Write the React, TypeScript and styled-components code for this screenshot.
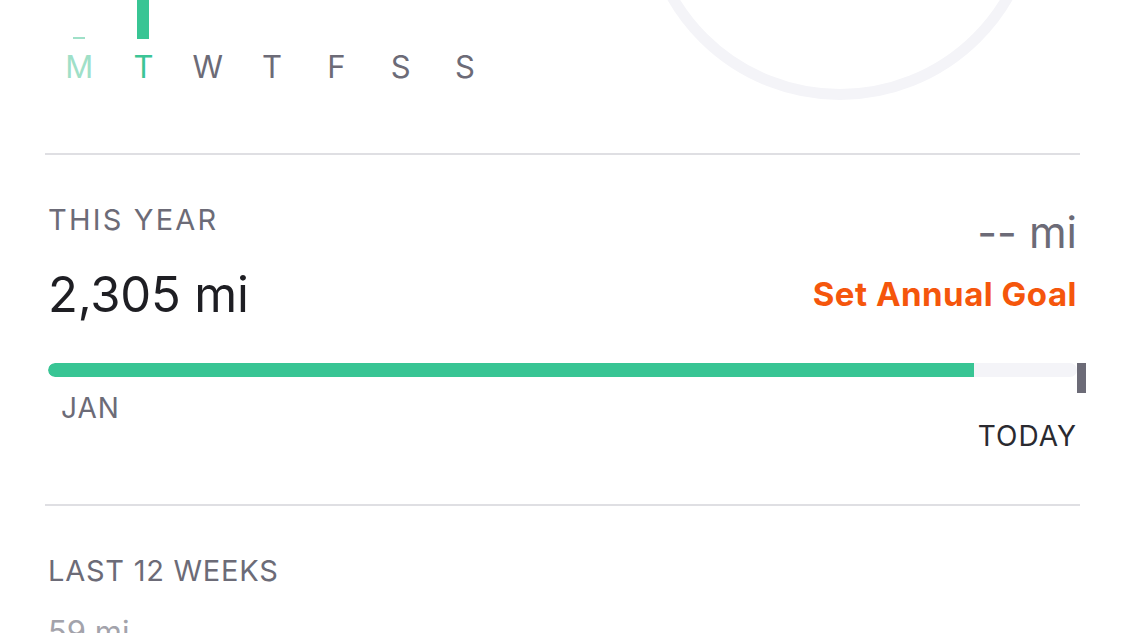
import React from "react";
import styled, { createGlobalStyle } from "styled-components";

const Global = createGlobalStyle`
  html, body { margin: 0; padding: 0; background: #ffffff; }
  body { font-family: Inter, "Noto Sans", "Liberation Sans", sans-serif; -webkit-font-smoothing: antialiased; }
`;

const Page = styled.div`
  width: 1125px;
  height: 633px;
  overflow: hidden;
  padding: 0 45px;
  box-sizing: border-box;
  background: #fff;
`;

const Section = styled.section<{ $h: number }>`
  height: ${(p) => p.$h}px;
  box-sizing: border-box;
  border-bottom: 2px solid #dfdfe3;
  padding: 0 3px;
`;

const TopRow = styled.div`
  display: flex;
  justify-content: space-between;
  height: 100%;
  overflow: hidden;
`;

const WeekChart = styled.div`
  display: grid;
  grid-template-columns: repeat(7, 64.3px);
  margin-left: -1px;
  align-content: start;
`;

const DayCol = styled.div`
  display: flex;
  flex-direction: column;
  align-items: center;
`;

const BarSlot = styled.div`
  height: 39px;
  display: flex;
  align-items: flex-end;
`;

const Bar = styled.div<{ $h: number; $c: string }>`
  width: 12px;
  height: ${(p) => p.$h}px;
  background: ${(p) => p.$c};
`;

const DayLetter = styled.div<{ $c: string }>`
  margin-top: 11px;
  font-size: 31px;
  line-height: 34px;
  font-weight: 400;
  color: ${(p) => p.$c};
`;

const Ring = styled.svg`
  display: block;
  margin-right: 27px;
  flex: none;
`;

const YearBody = styled.div`
  padding-top: 48px;
`;

const HeaderRow = styled.div`
  display: flex;
  justify-content: space-between;
`;

const LeftCol = styled.div`
  display: flex;
  flex-direction: column;
`;

const RightCol = styled.div`
  display: flex;
  flex-direction: column;
  align-items: flex-end;
`;

const Label = styled.div<{ $c?: string; $ls?: number }>`
  font-size: 29px;
  line-height: 34px;
  letter-spacing: ${(p) => (p.$ls ?? 1)}px;
  color: ${(p) => p.$c || "#6c6b77"};
  text-transform: uppercase;
`;

const BigValue = styled.div`
  margin-top: 30px;
  font-size: 49px;
  line-height: 56px;
  color: #1e1e23;
  letter-spacing: -0.2px;
`;

const GoalValue = styled.div`
  margin-top: 5px;
  font-size: 43px;
  line-height: 48px;
  color: #6c6b77;
`;

const GoalLink = styled.div`
  margin-top: 19px;
  font-size: 33px;
  line-height: 38px;
  font-weight: 700;
  color: #f5560c;
  letter-spacing: 0.5px;
`;

const ProgressRow = styled.div`
  margin-top: 40px;
  display: flex;
  align-items: flex-start;
`;

const Track = styled.div`
  flex: 1;
  height: 14px;
  border-radius: 7px;
  background: #f4f4f8;
  overflow: hidden;
  display: flex;
`;

const Fill = styled.div`
  height: 100%;
  background: #38c594;
  border-radius: 7px 0 0 7px;
`;

const Marker = styled.div`
  width: 9px;
  height: 30px;
  background: #6c6b77;
  margin-right: -9px;
  flex: none;
`;

const AxisRow = styled.div`
  display: flex;
  justify-content: space-between;
  align-items: flex-start;
`;

const AxisStart = styled(Label)`
  margin-top: -2px;
  margin-left: 13px;
  font-size: 28px;
`;

const AxisEnd = styled(Label)`
  margin-top: 26px;
  font-size: 28px;
  color: #2a2a30;
`;

const WeeksBody = styled.div`
  padding: 48px 3px 0;
`;

const SmallValue = styled.div`
  margin-top: 27px;
  font-size: 31px;
  line-height: 34px;
  color: #a3a3ab;
`;

const days = [
  { l: "M", c: "#9fe0c8", h: 2, bc: "#9fe0c8" },
  { l: "T", c: "#3cc596", h: 60, bc: "#38c594" },
  { l: "W", c: "#6c6b77", h: 0, bc: "" },
  { l: "T", c: "#6c6b77", h: 0, bc: "" },
  { l: "F", c: "#6c6b77", h: 0, bc: "" },
  { l: "S", c: "#6c6b77", h: 0, bc: "" },
  { l: "S", c: "#6c6b77", h: 0, bc: "" },
];

export default function App() {
  const progress = 0.9;
  return (
    <Page>
      <Global />
      <Section $h={155}>
        <TopRow>
          <WeekChart>
            {days.map((d, i) => (
              <DayCol key={i}>
                <BarSlot>{d.h > 0 && <Bar $h={d.h} $c={d.bc} />}</BarSlot>
                <DayLetter $c={d.c}>{d.l}</DayLetter>
              </DayCol>
            ))}
          </WeekChart>
          <Ring width="420" height="110" viewBox="0 0 420 110">
            <circle cx="210" cy="-98.8" r="193.3" fill="none" stroke="#f4f4f8" strokeWidth="11" />
          </Ring>
        </TopRow>
      </Section>
      <Section $h={351}>
        <YearBody>
          <HeaderRow>
            <LeftCol>
              <Label $ls={2.2}>This Year</Label>
              <BigValue>2,305 mi</BigValue>
            </LeftCol>
            <RightCol>
              <GoalValue>-- mi</GoalValue>
              <GoalLink>Set Annual Goal</GoalLink>
            </RightCol>
          </HeaderRow>
          <ProgressRow>
            <Track>
              <Fill style={{ width: `${progress * 100}%` }} />
            </Track>
            <Marker />
          </ProgressRow>
          <AxisRow>
            <AxisStart>Jan</AxisStart>
            <AxisEnd>Today</AxisEnd>
          </AxisRow>
        </YearBody>
      </Section>
      <WeeksBody>
        <Label $ls={0.75}>Last 12 Weeks</Label>
        <SmallValue>59 mi</SmallValue>
      </WeeksBody>
    </Page>
  );
}
